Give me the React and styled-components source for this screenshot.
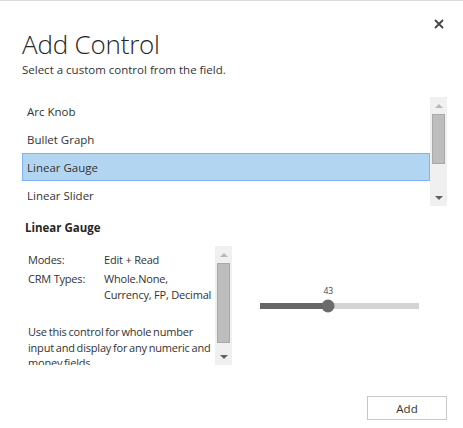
import React from "react";
import styled, { createGlobalStyle } from "styled-components";

const GlobalStyle = createGlobalStyle`
  html, body {
    margin: 0;
    padding: 0;
    background: #ffffff;
  }
  body {
    font-family: "Open Sans", "Noto Sans", "Liberation Sans", sans-serif;
    color: #333333;
  }
`;

const Dialog = styled.div`
  width: 463px;
  height: 428px;
  box-sizing: border-box;
  border-top: 1px solid #dcdcdc;
  padding: 0 16px 0 22px;
  display: flex;
  flex-direction: column;
  overflow: hidden;
`;

const CloseRow = styled.div`
  display: flex;
  justify-content: flex-end;
  padding-top: 16px;
  padding-right: 1px;
  height: 14px;
`;

const CloseButton = styled.button`
  width: 14px;
  height: 14px;
  padding: 0;
  border: 0;
  background: transparent;
  display: flex;
  align-items: center;
  justify-content: center;
  cursor: pointer;
`;

const Title = styled.h1`
  margin: -3px 0 0;
  font-weight: 300;
  font-size: 26px;
  line-height: 32px;
  color: #262626;
  letter-spacing: -0.2px;
`;

const Subtitle = styled.p`
  margin: 2px 0 0;
  font-size: 11.5px;
  line-height: 16px;
  color: #333333;
`;

const ListBox = styled.div`
  margin-top: 19px;
  height: 109px;
  display: flex;
`;

const ListItems = styled.ul`
  flex: 1;
  margin: 0;
  padding: 0;
  list-style: none;
  overflow: hidden;
`;

const ListItem = styled.li`
  box-sizing: border-box;
  height: 28px;
  padding: 0 4px;
  display: flex;
  align-items: center;
  font-size: 11.5px;
  color: #333333;
  background: ${(p) => (p.$selected ? "#b2d6f1" : "transparent")};
  border: 1px solid ${(p) => (p.$selected ? "#7eb4f2" : "transparent")};
`;

const Scrollbar = styled.div`
  width: 17px;
  flex: none;
  background: #f0f0f0;
  display: flex;
  flex-direction: column;
  align-items: center;
`;

const Arrow = styled.div`
  height: 17px;
  width: 17px;
  display: flex;
  align-items: center;
  justify-content: center;
  flex: none;

  &::before {
    content: "";
    width: 0;
    height: 0;
    border-left: 4px solid transparent;
    border-right: 4px solid transparent;
    ${(p) =>
      p.$down
        ? "border-top: 4px solid #606060;"
        : "border-bottom: 4px solid #b8b8b8;"}
  }
`;

const ThumbTrack = styled.div`
  flex: 1;
  width: 100%;
  display: flex;
  justify-content: center;
`;

const Thumb = styled.div`
  width: 13px;
  box-sizing: border-box;
  height: ${(p) => p.$h}px;
  background: #bdbdbd;
  border: 1px solid #a9a9a9;
`;

const SectionTitle = styled.h2`
  margin: 14px 0 0 3px;
  font-size: 11.5px;
  line-height: 16px;
  font-weight: 700;
  color: #262626;
`;

const DetailRow = styled.div`
  margin-top: 10px;
  height: 119px;
  display: flex;
`;

const InfoPanel = styled.div`
  width: 210px;
  flex: none;
  display: flex;
`;

const InfoText = styled.div`
  flex: 1;
  overflow: hidden;
  padding: 6px 0 0 6px;
  font-size: 11px;
  line-height: 15.5px;
  letter-spacing: -0.2px;
  word-spacing: -0.8px;
  color: #333333;
`;

const InfoGrid = styled.div`
  display: grid;
  grid-template-columns: 76px 1fr;
  row-gap: 3px;
  white-space: nowrap;
  word-spacing: 0;
  line-height: 16px;
`;

const Description = styled.p`
  margin: 21px 0 0;
`;

const SliderArea = styled.div`
  flex: 1;
  display: flex;
  align-items: center;
  justify-content: center;
`;

const Slider = styled.div`
  width: 159px;
  display: flex;
  flex-direction: column;
  margin-top: -17px;
`;

const ValueLabel = styled.div`
  height: 12px;
  font-size: 8.5px;
  line-height: 12px;
  color: #444444;
  position: relative;
`;

const ValueText = styled.span`
  position: absolute;
  transform: translateX(-50%);
`;

const Track = styled.div`
  position: relative;
  margin-top: 6px;
  height: 6px;
  background: #d4d4d4;
`;

const Fill = styled.div`
  height: 100%;
  background: #666666;
`;

const Knob = styled.div`
  position: absolute;
  top: 50%;
  width: 13px;
  height: 13px;
  border-radius: 50%;
  background: #6b6b6b;
  transform: translate(-50%, -50%);
`;

const Footer = styled.div`
  margin-top: 31px;
  display: flex;
  justify-content: flex-end;
`;

const AddButton = styled.button`
  width: 80px;
  height: 24px;
  box-sizing: border-box;
  border: 1px solid #c6c6c6;
  background: #ffffff;
  font-family: inherit;
  font-size: 11.5px;
  color: #333333;
  cursor: pointer;
`;

const controls = ["Arc Knob", "Bullet Graph", "Linear Gauge", "Linear Slider"];

function ScrollBar({ thumb }) {
  return (
    <Scrollbar>
      <Arrow />
      <ThumbTrack>
        <Thumb $h={thumb} />
      </ThumbTrack>
      <Arrow $down />
    </Scrollbar>
  );
}

export default function App() {
  const value = 43;
  const pct = 43;
  return (
    <>
      <GlobalStyle />
      <Dialog>
        <CloseRow>
          <CloseButton aria-label="Close">
            <svg width="10" height="10" viewBox="0 0 10 10">
              <path d="M1 1L9 9M9 1L1 9" stroke="#444" strokeWidth="1.8" />
            </svg>
          </CloseButton>
        </CloseRow>
        <Title>Add Control</Title>
        <Subtitle>Select a custom control from the field.</Subtitle>

        <ListBox>
          <ListItems>
            {controls.map((c) => (
              <ListItem key={c} $selected={c === "Linear Gauge"}>
                {c}
              </ListItem>
            ))}
          </ListItems>
          <ScrollBar thumb={50} />
        </ListBox>

        <SectionTitle>Linear Gauge</SectionTitle>
        <DetailRow>
          <InfoPanel>
            <InfoText>
              <InfoGrid>
                <span>Modes:</span>
                <span>Edit + Read</span>
                <span>CRM Types:</span>
                <span>
                  Whole.None,
                  <br />
                  Currency, FP, Decimal
                </span>
              </InfoGrid>
              <Description>
                Use this control for whole number input and display for any
                numeric and money fields.
              </Description>
            </InfoText>
            <ScrollBar thumb={80} />
          </InfoPanel>
          <SliderArea>
            <Slider>
              <ValueLabel>
                <ValueText style={{ left: `${pct}%` }}>{value}</ValueText>
              </ValueLabel>
              <Track>
                <Fill style={{ width: `${pct}%` }} />
                <Knob style={{ left: `${pct}%` }} />
              </Track>
            </Slider>
          </SliderArea>
        </DetailRow>

        <Footer>
          <AddButton>Add</AddButton>
        </Footer>
      </Dialog>
    </>
  );
}
